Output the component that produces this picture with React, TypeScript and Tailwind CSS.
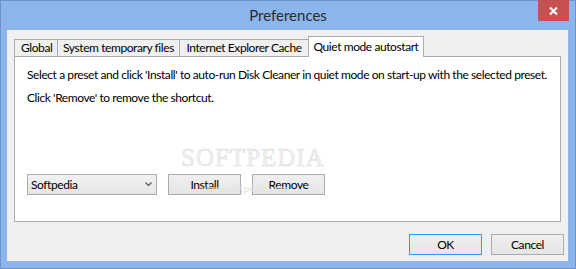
import React from "react";

const font = { fontFamily: 'Lato, "Noto Sans", "Liberation Sans", sans-serif', letterSpacing: "-0.42px" };

const btn =
  "h-[21px] border bg-gradient-to-b from-[#f0f0f0] to-[#e5e5e5] flex items-center justify-center";

export default function App() {
  return (
    <div
      className="w-[576px] h-[269px] bg-[#8bb5ec] border border-[#6d92c9] flex flex-col text-[12px] text-[#000] whitespace-nowrap"
      style={font}
    >
      <div className="relative h-[29px] flex items-center justify-center">
        <span className="text-[15px] text-[#2b2b2b] -mt-[1px] tracking-normal">Preferences</span>
        <div className="absolute right-[6px] -top-px w-[31px] h-[21px] bg-[#c75050] flex items-center justify-center">
          <svg width="9" height="8" viewBox="0 0 9 8">
            <path d="M1 0.5 L8 7.5 M8 0.5 L1 7.5" stroke="#fff" strokeWidth="2" />
          </svg>
        </div>
      </div>
      <div className="ml-[6px] mr-[7px] flex-1 mb-[7px] bg-[#f0f0f0] flex flex-col px-[7px] pt-[6px]">
        <div className="flex items-end h-[20px] relative z-10">
          <div className="h-[17px] border border-b-0 border-[#acacac] bg-[#f0f0f0] flex items-center pl-[6px] w-[44px]">Global</div>
          <div className="h-[17px] -ml-px border border-b-0 border-[#acacac] bg-[#f0f0f0] flex items-center justify-center w-[123px]">System temporary files</div>
          <div className="h-[17px] -ml-px border border-b-0 border-[#acacac] bg-[#f0f0f0] flex items-center justify-center w-[130px]">Internet Explorer Cache</div>
          <div className="h-[21px] -ml-px -mb-px border border-b-0 border-[#acacac] bg-white flex items-start pt-[1px] justify-center w-[116px]">Quiet mode autostart</div>
        </div>
        <div className="relative h-[166px] bg-white border border-[#acacac] pl-[12px] pt-[9px]">
          <div className="h-[18px] leading-[18px]">Select a preset and click 'Install' to auto-run Disk Cleaner in quiet mode on start-up with the selected preset.</div>
          <div className="h-[18px] leading-[18px] mt-[5px]">Click 'Remove' to remove the shortcut.</div>
          <div className="flex items-center mt-[67px] gap-[11px]">
            <div className="w-[130px] h-[21px] border border-[#acacac] bg-gradient-to-b from-[#f2f2f2] to-[#e6e6e6] flex items-center justify-between pl-[3px] pr-[4px]">
              <span>Softpedia</span>
              <svg width="7" height="5" viewBox="0 0 7 5">
                <path d="M0.5 0.5 L3.5 3.5 L6.5 0.5" stroke="#555" strokeWidth="1.2" fill="none" />
              </svg>
            </div>
            <div className={`${btn} w-[73px] border-[#acacac]`}>Install</div>
            <div className={`${btn} w-[73px] border-[#acacac]`}>Remove</div>
          </div>
          <div
            className="absolute left-[166px] top-[82px] text-[25px] tracking-[1px] text-[#f2f2f2] pointer-events-none"
            style={{ fontFamily: '"Liberation Serif", serif', WebkitTextStroke: "0.6px #dedede" }}
          >
            SOFTPEDIA
          </div>
          <div className="absolute left-[186px] top-[126px] text-[10px] leading-[10px] tracking-normal text-[#e2e2e2] pointer-events-none">www.softpedia.com</div>
        </div>
        <div className="flex justify-end gap-[9px] mt-[12px] -mr-[3px]">
          <div className={`${btn} w-[73px] border-[#3399ff]`}>OK</div>
          <div className={`${btn} w-[73px] border-[#acacac]`}>Cancel</div>
        </div>
      </div>
    </div>
  );
}
